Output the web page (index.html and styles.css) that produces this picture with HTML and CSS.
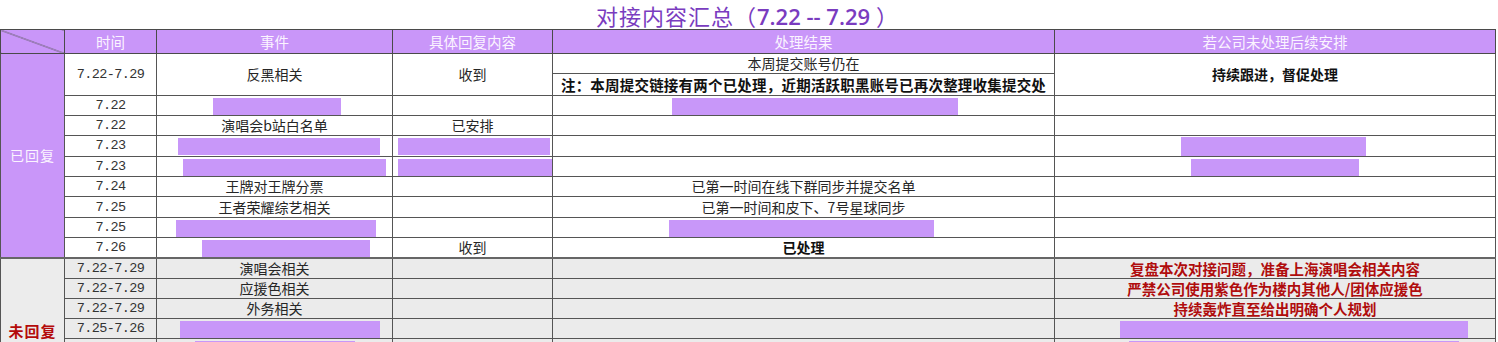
FILE: index.html
```html
<!DOCTYPE html>
<html lang="zh-CN">
<head>
<meta charset="utf-8">
<title>对接内容汇总</title>
<link rel="stylesheet" href="styles.css">
</head>
<body>
<div class="sheet">
  <h1 class="title">对接内容汇总（<span class="num">7.22 -- 7.29</span> ）</h1>
  <table class="grid">
    <colgroup>
      <col class="c-group">
      <col class="c-time">
      <col class="c-event">
      <col class="c-reply">
      <col class="c-result">
      <col class="c-plan">
    </colgroup>
    <thead>
      <tr class="r-head">
        <th class="diag"></th>
        <th>时间</th>
        <th>事件</th>
        <th>具体回复内容</th>
        <th>处理结果</th>
        <th>若公司未处理后续安排</th>
      </tr>
    </thead>
    <tbody>
      <tr class="r-a">
        <td rowspan="10" class="group done">已回复</td>
        <td rowspan="2" class="time">7.22-7.29</td>
        <td rowspan="2">反黑相关</td>
        <td rowspan="2">收到</td>
        <td>本周提交账号仍在</td>
        <td rowspan="2" class="strong">持续跟进，督促处理</td>
      </tr>
      <tr class="r-b">
        <td class="strong note">注：本周提交链接有两个已处理，近期活跃职黑账号已再次整理收集提交处</td>
      </tr>
      <tr class="r">
        <td class="time">7.22</td>
        <td><span class="mask" style="width:128px;margin-left:4px"></span></td>
        <td></td>
        <td><span class="mask" style="width:286px;margin-left:22px"></span></td>
        <td></td>
      </tr>
      <tr class="r">
        <td class="time">7.22</td>
        <td>演唱会b站白名单</td>
        <td>已安排</td>
        <td></td>
        <td></td>
      </tr>
      <tr class="r">
        <td class="time">7.23</td>
        <td><span class="mask" style="width:202px;margin-left:8px"></span></td>
        <td><span class="mask" style="width:152px;margin-left:2px"></span></td>
        <td></td>
        <td><span class="mask tall" style="width:185px;margin-left:-3px"></span></td>
      </tr>
      <tr class="r">
        <td class="time">7.23</td>
        <td><span class="mask" style="width:203px;margin-left:20px"></span></td>
        <td><span class="mask" style="width:154px;margin-left:4px"></span></td>
        <td></td>
        <td><span class="mask" style="width:168px;margin-left:0px"></span></td>
      </tr>
      <tr class="r">
        <td class="time">7.24</td>
        <td>王牌对王牌分票</td>
        <td></td>
        <td>已第一时间在线下群同步并提交名单</td>
        <td></td>
      </tr>
      <tr class="r">
        <td class="time">7.25</td>
        <td>王者荣耀综艺相关</td>
        <td></td>
        <td>已第一时间和皮下、7号星球同步</td>
        <td></td>
      </tr>
      <tr class="r">
        <td class="time">7.25</td>
        <td><span class="mask" style="width:200px;margin-left:2px"></span></td>
        <td></td>
        <td><span class="mask" style="width:265px;margin-left:-5px"></span></td>
        <td></td>
      </tr>
      <tr class="r r-last">
        <td class="time">7.26</td>
        <td><span class="mask" style="width:168px;margin-left:22px"></span></td>
        <td>收到</td>
        <td class="strong">已处理</td>
        <td></td>
      </tr>
      <tr class="r gray r-first">
        <td rowspan="7" class="group todo">未回复</td>
        <td class="time">7.22-7.29</td>
        <td>演唱会相关</td>
        <td></td>
        <td></td>
        <td class="strong red">复盘本次对接问题，准备上海演唱会相关内容</td>
      </tr>
      <tr class="r gray">
        <td class="time">7.22-7.29</td>
        <td>应援色相关</td>
        <td></td>
        <td></td>
        <td class="strong red">严禁公司使用紫色作为楼内其他人/团体应援色</td>
      </tr>
      <tr class="r gray">
        <td class="time">7.22-7.29</td>
        <td>外务相关</td>
        <td></td>
        <td></td>
        <td class="strong red">持续轰炸直至给出明确个人规划</td>
      </tr>
      <tr class="r gray">
        <td class="time">7.25-7.26</td>
        <td><span class="mask" style="width:200px;margin-left:10px"></span></td>
        <td></td>
        <td></td>
        <td><span class="mask" style="width:348px;margin-left:38px"></span></td>
      </tr>
      <tr class="r gray">
        <td class="time"></td>
        <td class="top"><span class="mask" style="width:160px;margin-left:0px"></span></td>
        <td></td>
        <td></td>
        <td class="top"><span class="mask" style="width:330px;margin-left:37px"></span></td>
      </tr>
      <tr class="r gray">
        <td class="time"></td>
        <td></td>
        <td></td>
        <td></td>
        <td></td>
      </tr>
      <tr class="r gray">
        <td class="time"></td>
        <td></td>
        <td></td>
        <td></td>
        <td></td>
      </tr>
    </tbody>
  </table>
</div>
</body>
</html>
```

FILE: styles.css
```css
html, body {
  margin: 0;
  padding: 0;
  background: #ffffff;
}

body {
  font-family: "Noto Sans CJK SC", "Noto Sans", sans-serif;
  color: #262626;
  overflow: hidden;
}

.sheet {
  width: 1498px;
}

.title {
  margin: 0;
  height: 29px;
  width: 1495px;
  text-align: center;
  font-size: 22px;
  font-weight: 400;
  line-height: 31px;
  color: #7a3cbf;
  letter-spacing: 1px;
}

.title .num {
  font-family: "Open Sans", "Noto Sans", sans-serif;
  font-weight: 600;
  letter-spacing: 0;
}

.grid {
  border-collapse: collapse;
  table-layout: fixed;
  width: 1495px;
  font-size: 14px;
  line-height: 17px;
}

.c-group { width: 64px; }
.c-time { width: 92px; }
.c-event { width: 236px; }
.c-reply { width: 160px; }
.c-result { width: 502px; }
.c-plan { width: 441px; }

.grid th,
.grid td {
  border: 1px solid #555;
  padding: 0;
  text-align: center;
  vertical-align: middle;
  white-space: nowrap;
  overflow: visible;
}

.r-head {
  height: 24px;
}

.r-head th {
  background: #c996f9;
  color: #fbf4ff;
  font-weight: 400;
  font-size: 14.5px;
  border-color: #4a4a4a;
}

.r-head th.diag {
  background:
    linear-gradient(to top right, transparent calc(50% - 0.7px), #555 50%, transparent calc(50% + 0.7px)),
    #c996f9;
}

.r-a { height: 19.5px; }
.r-b { height: 22px; }
.r { height: 20.3px; }

.r-last td {
  border-bottom: 2px solid #666;
}

.time {
  font-family: "Liberation Mono", "DejaVu Sans Mono", monospace;
  font-size: 13.5px;
  letter-spacing: -0.6px;
  color: #333;
}

.group {
  font-size: 14px;
  letter-spacing: 1px;
}

.group.done {
  background: #c996f9;
  color: #fbf4ff;
  border-bottom: 2px solid #666;
}

.group.todo {
  background: #ececec;
  color: #b40a0a;
  font-weight: 700;
  font-size: 15px;
  padding-top: 3px;
}

.gray td {
  background: #ebebeb;
}

.strong {
  font-weight: 700;
  color: #111;
}

.note {
  font-size: 14.5px;
  letter-spacing: 0.2px;
}

.red {
  color: #b00d0d;
  font-size: 14.5px;
}

.mask {
  display: inline-block;
  vertical-align: middle;
  height: 17px;
  background: #c897f9;
}

.mask.tall {
  height: 19px;
}

.top {
  vertical-align: top;
}
```
